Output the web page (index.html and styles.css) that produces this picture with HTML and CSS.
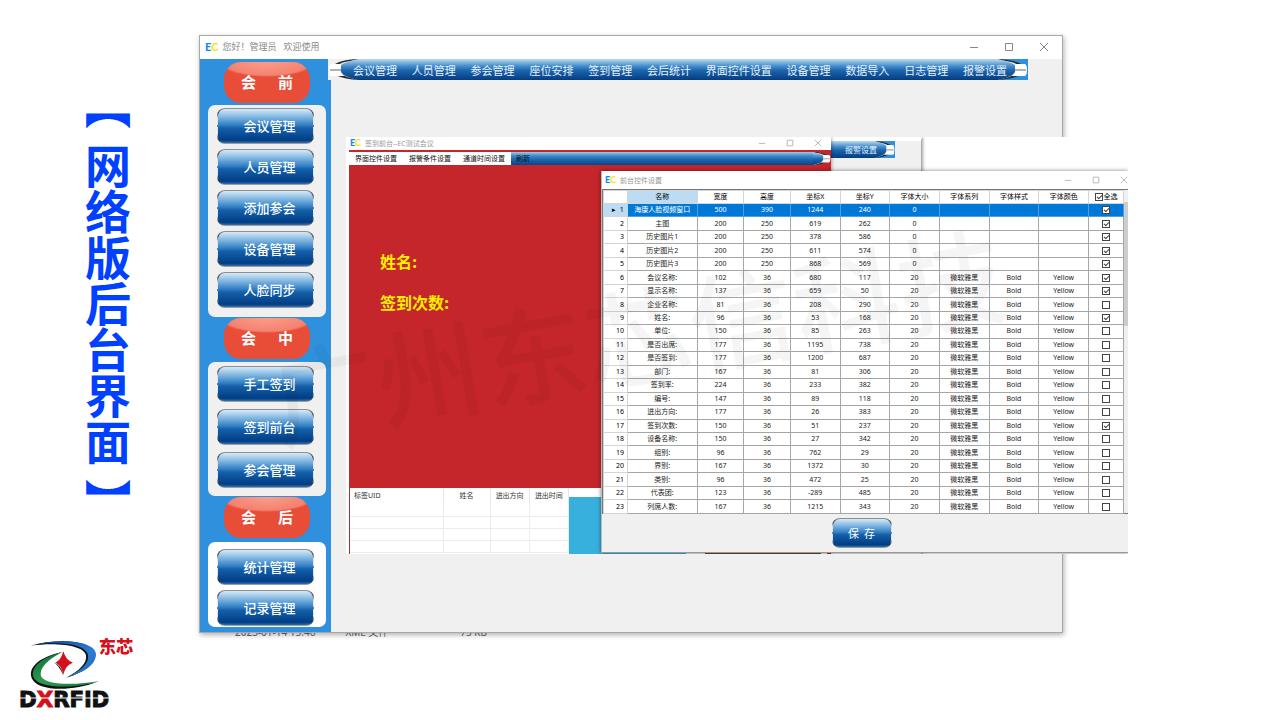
FILE: index.html
```html
<!DOCTYPE html>
<html lang="zh-CN">
<head>
<meta charset="utf-8">
<title>网络版后台界面</title>
<link rel="stylesheet" href="styles.css">
</head>
<body>
<svg class="defs" width="0" height="0" aria-hidden="true">
  <defs>
    <linearGradient id="bar" gradientUnits="userSpaceOnUse" x1="0" y1="0" x2="0" y2="21">
      <stop offset="0" stop-color="#b9dcf3"/><stop offset=".3" stop-color="#4f94cf"/>
      <stop offset=".55" stop-color="#1b65ad"/><stop offset="1" stop-color="#063c80"/>
    </linearGradient>
    <linearGradient id="blue" x1="0" y1="0" x2="1" y2="1">
      <stop offset="0" stop-color="#06408e"/><stop offset=".6" stop-color="#2b7fd6"/><stop offset="1" stop-color="#1c63b5"/>
    </linearGradient>
    <linearGradient id="green" x1="0" y1="0" x2="1" y2="1">
      <stop offset="0" stop-color="#0b6b37"/><stop offset=".5" stop-color="#2d9a50"/><stop offset="1" stop-color="#0b7a3c"/>
    </linearGradient>
    <symbol id="cap" viewBox="0 0 30 21" preserveAspectRatio="none">
      <path d="M0 0H30V21H0Z" fill="currentColor"/>
      <path d="M0 0C10 .5 18 2 23 5V16C16 19 8 20.500 0 21Z" fill="#2b2b2b"/>
      <path d="M0 1C9 2 16 3 20 6V14C14 17 8 19 0 21Z" fill="#dce6ee"/>
      <path d="M0 0C8 2 15 4 18 7V13C14 17 8 19 0 21Z" fill="url(#bar)"/>
      <path d="M17 5H27Q29 6 29 11T27 17H14L17 13Z" fill="#fff"/>
      <path d="M17 11H28" stroke="#666"/>
    </symbol>
    <symbol id="winbtns" viewBox="0 0 80 10">
      <path d="M1 5.500H9M36.500 1.500H43.500V8.500H36.500ZM71 1L79 9M79 1L71 9" fill="none" stroke="currentColor"/>
    </symbol>
  </defs>
</svg>

<div class="stage">
  <aside class="caption">
    <h1><span>【</span>网络版后台界面<span>】</span></h1>
  </aside>

  <main class="desktop">
    <div class="file-row"><span>2023-01-14 15:46</span><span>XML 文件</span><span>75 KB</span></div>
    <section class="win main-win">
      <header class="titlebar">
        <b class="ec">E<i>C</i></b><span>您好！管理员&nbsp;&nbsp; 欢迎使用</span>
        <svg class="winbtns" viewBox="0 0 80 10"><use href="#winbtns"/></svg>
      </header>
      <div class="body">
        <div class="sidebar">
          <h2 class="pill"><span>会</span><span>前</span></h2>
          <div class="group">
            <button class="glossy">会议管理</button>
            <button class="glossy">人员管理</button>
            <button class="glossy">添加参会</button>
            <button class="glossy">设备管理</button>
            <button class="glossy">人脸同步</button>
          </div>
          <h2 class="pill"><span>会</span><span>中</span></h2>
          <div class="group loose">
            <button class="glossy">手工签到</button>
            <button class="glossy">签到前台</button>
            <button class="glossy">参会管理</button>
          </div>
          <h2 class="pill"><span>会</span><span>后</span></h2>
          <div class="group last">
            <button class="glossy">统计管理</button>
            <button class="glossy">记录管理</button>
          </div>
        </div>
        <div class="content">
          <nav class="menu">
            <svg class="cap flip"><use href="#cap"/></svg>
            <a href="#">会议管理</a><a href="#">人员管理</a><a href="#">参会管理</a><a href="#">座位安排</a><a href="#">签到管理</a><a href="#">会后统计</a><a href="#">界面控件设置</a><a href="#">设备管理</a><a href="#">数据导入</a><a href="#">日志管理</a><a href="#">报警设置</a>
            <svg class="cap"><use href="#cap"/></svg>
          </nav>
        </div>
      </div>
    </section>

    <div class="overlay">
      <div class="back-win">
        <nav class="menu small"><a href="#">报警设置</a><svg class="cap"><use href="#cap"/></svg></nav>
      </div>

      <section class="win sign-win">
        <header class="titlebar tiny">
          <b class="ec">E<i>C</i></b><span>签到前台--EC测试会议</span>
          <svg class="winbtns" viewBox="0 0 80 10"><use href="#winbtns"/></svg>
        </header>
        <div class="red">
          <nav class="tabs">
            <a href="#">界面控件设置</a><a href="#">报警条件设置</a><a href="#">通道时间设置</a>
            <div class="tabbar"><a href="#">刷新</a><svg class="cap"><use href="#cap"/></svg></div>
          </nav>
          <p>姓名:</p>
          <p>签到次数:</p>
        </div>
        <div class="lower">
          <table class="log">
            <thead><tr><th>标签UID</th><th>姓名</th><th>进出方向</th><th>进出时间</th></tr></thead>
            <tbody>
              <tr><td></td><td></td><td></td><td></td></tr>
              <tr><td></td><td></td><td></td><td></td></tr>
              <tr><td></td><td></td><td></td><td></td></tr>
              <tr><td></td><td></td><td></td><td></td></tr>
            </tbody>
          </table>
          <div class="art"></div>
        </div>
      </section>

      <section class="win set-win">
        <header class="titlebar tiny">
          <b class="ec">E<i>C</i></b><span>前台控件设置</span>
          <svg class="winbtns" viewBox="0 0 80 10"><use href="#winbtns"/></svg>
        </header>
        <div class="grid-wrap">
          <table class="grid">
            <colgroup><col class="c-no"><col class="c-name"><col class="c-s"><col class="c-s"><col><col><col><col><col><col><col class="c-chk"></colgroup>
            <thead><tr><th></th><th class="on">名称</th><th>宽度</th><th>高度</th><th>坐标X</th><th>坐标Y</th><th>字体大小</th><th>字体系列</th><th>字体样式</th><th>字体颜色</th><th><label><input type="checkbox" checked>全选</label></th></tr></thead>
            <tbody id="rows"></tbody>
          </table>
          <div class="scroll"><i></i></div>
        </div>
        <footer><button class="glossy save">保&nbsp; 存</button></footer>
      </section>
    </div>
  </main>
</div>

<svg class="watermark" viewBox="0 0 1280 720" aria-hidden="true"><text transform="rotate(-10 638 340)" x="638" y="378" text-anchor="middle">广州东芯信科技</text></svg>

<svg class="logo" viewBox="0 0 480 300" role="img" aria-label="东芯 DXRFiD">
  <path d="M90 77C190 50 285 65 284 108C280 140 240 160 198 174C240 150 262 130 258 105C250 75 170 66 90 77Z" fill="#111"/>
  <path d="M104 74C200 52 292 68 288 106C284 140 245 160 202 171C245 150 268 130 264 104C255 72 180 64 104 74Z" fill="url(#blue)"/>
  <path d="M183 97C120 112 84 140 95 174C110 216 220 214 290 186C220 202 135 202 118 174C108 148 140 118 183 97Z" fill="#111"/>
  <path d="M190 95C125 112 92 140 100 170C114 208 230 206 299 183C225 196 140 196 124 170C115 145 145 116 190 95Z" fill="url(#green)"/>
  <path d="M161 128Q184 134 191 168Q178 136 161 128Z" fill="#111"/>
  <path d="M190 94Q198 122 219 128Q198 134 190 163Q183 134 166 128Q183 121 190 94Z" fill="#d5101c"/>
  <text class="logo-cn" x="296" y="99">东芯</text>
  <text class="logo-en" x="57" y="260">D<tspan class="x">X</tspan>RFiD</text>
  <path d="M58 234H330" stroke="#fff" stroke-width="3"/>
</svg>
<script src="rows.js"></script>
</body>
</html>
```

FILE: styles.css
```css
* { box-sizing: border-box; }
body {
  margin: 0;
  position: relative;
  min-height: 100vh;
  overflow: hidden;
  background: #fff;
  font-family: "Noto Sans", "Noto Sans CJK SC", sans-serif;
}
a { color: inherit; text-decoration: none; }
i { font-style: normal; }
.defs { position: absolute; }
.stage { display: flex; align-items: flex-start; }

.caption { flex: 0 0 199px; padding: 83px 0 0 84px; }
.caption h1 {
  margin: 0;
  writing-mode: vertical-rl;
  font: 700 46px/48px "Noto Sans CJK SC", sans-serif;
  color: #0040ff;
}
.caption span { display: inline-block; font-weight: 900; }
.caption span:first-child { margin-bottom: 14px; }
.caption span:last-child { margin-top: 14px; }

.desktop { position: relative; flex: 1; padding: 35px 217px 0 0; }
.file-row {
  position: absolute;
  left: 36px;
  top: 625px;
  display: flex;
  gap: 30px;
  font-size: 10px;
  line-height: 14px;
  color: #666;
}
.file-row span:last-child { margin-left: 42px; }
.win { background: #fff; }
.main-win {
  position: relative;
  border: 1px solid #a8a8a8;
  box-shadow: 1px 2px 5px rgba(0, 0, 0, .3);
}
.titlebar {
  display: flex;
  align-items: center;
  gap: 4px;
  height: 23px;
  padding: 0 13px 2px 5px;
  font-size: 9px;
  color: #8a8a8a;
}
.ec { font: 900 11px/12px "Lato", sans-serif; color: #1389f0; }
.ec i { color: #ffe11a; }
.winbtns { width: 80px; height: 10px; margin-left: auto; color: #888; }
.titlebar.tiny { height: 13px; padding: 0 9px 1px 4px; font-size: 7px; color: #999; }
.tiny .ec { font-size: 9px; line-height: 10px; }
.tiny .winbtns { width: 64px; height: 8px; color: #aaa; }

.body { display: flex; background: #f0f0f0; }
.sidebar {
  flex: 0 0 131px;
  display: flex;
  flex-direction: column;
  align-items: center;
  padding: 2px 5px 5px 8px;
  background: #2f91dd;
}
.pill {
  position: relative;
  display: flex;
  justify-content: space-between;
  width: 86px;
  height: 41px;
  margin: 1px 0 2px;
  padding: 0 17px;
  border-radius: 17px;
  background: radial-gradient(ellipse 48px 15px at 50% 0, #fb9d8c 0, #f4826f 88%, #e84d37 100%) #e84d37;
  font: 700 15px/40px "Noto Sans CJK SC", sans-serif;
  color: #fff;
}
.group {
  display: flex;
  flex-direction: column;
  gap: 5px;
  width: 100%;
  padding: 3px 12px 9px 9px;
  border-radius: 7px;
  background: #f0f0f0;
}
.group.loose { gap: 7px; margin-top: 1px; padding-top: 4px; padding-bottom: 8px; }
.group.last { padding-top: 7px; padding-bottom: 1px; margin-top: 2px; background: #fff; }
.glossy {
  height: 36px;
  padding: 0 0 0 8px;
  border: 1px solid transparent;
  border-radius: 8px;
  background:
    linear-gradient(#d6eaf8, #86bae3 22%, #2f7dc2 48%, #1560aa 56%, #003d84 92%, #3670ab) padding-box,
    linear-gradient(#999, #333 14%, #dde6ee 28%, #dde6ee 46%, #345 50%, #dde6ee 54%, #dde6ee 72%, #234 88%, #aaa) border-box;
  font: 500 13px/32px "Noto Sans CJK SC", sans-serif;
  color: #fff;
}

.content { flex: 1; }
.menu {
  position: relative;
  display: flex;
  align-items: center;
  justify-content: space-between;
  height: 21px;
  margin: 0 34px 0 -3px;
  padding: 0 21px 0 25px;
  background: linear-gradient(#b9dcf3, #4f94cf 30%, #1b65ad 55%, #063c80);
  font-size: 11px;
  color: #e8f2fb;
}
.menu a { position: relative; z-index: 1; }
.cap { position: absolute; right: 0; top: 0; width: 30px; height: 100%; color: #2f91dd; }
.cap.flip { right: auto; left: 0; transform: scaleX(-1); color: #f0f0f0; }

.overlay {
  position: absolute;
  left: 147px;
  top: 137px;
  width: 782px;
  height: 417px;
  overflow: hidden;
  background: #fff;
}
.back-win {
  position: absolute;
  left: 480px;
  top: 0;
  width: 96px;
  height: 417px;
  border-top: 4px solid #fff;
  border-right: 1px solid #aaa;
  background: #f0f0f0;
  box-shadow: 1px 0 3px rgba(0, 0, 0, .35);
}
.menu.small { height: 17px; margin: 0 26px 0 0; padding: 0 15px 0 19px; font-size: 8px; }
.small .cap { width: 20px; }
.sign-win { position: absolute; left: 0; top: 0; width: 485px; padding-left: 3px; box-shadow: 1px 0 3px rgba(0, 0, 0, .3); }
.sign-win .titlebar { padding-left: 1px; }
.red { height: 338px; padding-top: 2px; background: #c4262b; }
.tabs { display: flex; height: 13px; margin-bottom: 84px; background: #fff; font: 7px/13px "Noto Sans CJK SC", sans-serif; color: #111; }
.tabs > a { padding: 0 6px; }
.tabbar { position: relative; flex: 1; background: linear-gradient(#9ecbea, #3f88c6 30%, #1b65ad 60%, #0b4488); }
.tabbar a { padding-left: 5px; }
.tabbar .cap { width: 18px; color: #c4262b; }
.red p { margin: 0 0 17px 31px; font: 700 16px/24px "Noto Sans CJK SC", sans-serif; color: #ffee00; }
.lower { display: flex; height: 66px; border-left: 1px solid #a33; }
.log { flex: 0 0 219px; table-layout: fixed; width: 219px; border-collapse: collapse; font-size: 7px; line-height: 10px; color: #333; align-self: flex-start; }
.log th { height: 16px; padding: 0; font-weight: 400; border-right: 1px solid #e6e6e6; }
.log th:first-child { width: 93px; padding-left: 4px; text-align: left; }
.log th:nth-child(2) { width: 47px; }
.log td { height: 12px; padding: 0; border: 1px solid #ececec; border-left: 0; border-top: 0; }
.art {
  flex: 1;
  margin-top: 9px;
  background: linear-gradient(90deg, #38b0de 0 117px, #eee 117px 136px, #6b4a2a 136px 252px, #eee 252px 258px, #b22226 258px);
}

.set-win {
  position: absolute;
  left: 255px;
  top: 34px;
  right: 0;
  height: 382px;
  border-left: 1px solid #bbb;
  border-bottom: 1px solid #999;
  background: #f0f0f0;
  box-shadow: 0 0 4px rgba(0, 0, 0, .5);
}
.set-win .titlebar { height: 18px; padding: 0 0 1px 3px; background: #fff; }
.grid-wrap { display: flex; height: 325px; border: 1px solid #777; border-right: 0; background: #fff; }
.grid { flex: 1; table-layout: fixed; height: 324px; border-collapse: collapse; font-size: 7px; line-height: 10px; color: #222; }
.grid col { width: 50px; }
.grid .c-no { width: 24px; }
.grid .c-name { width: 70px; }
.grid .c-s { width: 47px; }
.grid .c-chk { width: 35px; }
.grid th, .grid td { padding: 0; height: 13px; border: 1px solid #a6a6a6; font-weight: 400; text-align: center; white-space: nowrap; }
.grid th { border-color: #d5d5d5; color: #000; }
.grid th.on { background: #bcdcf4; }
.grid tbody th { padding-right: 3px; text-align: right; }
.grid tr.sel td { background: #0078d7; color: #fff; border-color: #4b9fe0; }
.grid tr.sel th { background: #bcdcf4; }
.grid label { display: flex; align-items: center; justify-content: center; gap: 1px; }
.grid input {
  appearance: none;
  display: block;
  position: relative;
  width: 8px;
  height: 8px;
  margin: 0 auto;
  border: 1px solid #444;
  background: #fff;
}
.grid label input { margin: 0; }
.grid input:checked::after {
  content: "";
  position: absolute;
  left: 1px;
  top: 1px;
  width: 4px;
  height: 2px;
  border: solid #444;
  border-width: 0 0 1px 1px;
  transform: rotate(-45deg);
}
.scroll { flex: 0 0 4px; padding-top: 12px; background: #f0f0f0; }
.scroll i { display: block; height: 124px; background: #cdcdcd; }
.set-win footer { display: flex; justify-content: center; padding: 4px 7px 0 0; }
.save { width: 60px; height: 30px; padding: 0; font-size: 11px; line-height: 26px; font-weight: 400; }

.watermark { position: absolute; inset: 0; width: 100%; pointer-events: none; }
.watermark text { font: 500 106px "Noto Sans CJK SC", sans-serif; fill: rgba(0, 0, 0, .04); }
.logo { position: absolute; left: 0; bottom: 0; width: 160px; height: 100px; }
.logo-cn { font: 900 52px "Noto Sans CJK SC", sans-serif; fill: #d5101c; }
.logo-en { font: 700 64px "DejaVu Sans", sans-serif; fill: #111; stroke: #111; stroke-width: 3px; }
.logo-en .x { fill: #d5101c; stroke: #d5101c; }
```

FILE: rows.js
```js
const rows = [
  ["海康人脸视频窗口", 500, 390, 1244, 240, 0, 1],
  ["主图", 200, 250, 619, 262, 0, 1],
  ["历史图片1", 200, 250, 378, 586, 0, 1],
  ["历史图片2", 200, 250, 611, 574, 0, 1],
  ["历史图片3", 200, 250, 868, 569, 0, 1],
  ["会议名称:", 102, 36, 680, 117, 20, 1],
  ["显示名称:", 137, 36, 659, 50, 20, 1],
  ["企业名称:", 81, 36, 208, 290, 20, 0],
  ["姓名:", 96, 36, 53, 168, 20, 1],
  ["单位:", 150, 36, 85, 263, 20, 0],
  ["是否出席:", 177, 36, 1195, 738, 20, 0],
  ["是否签到:", 177, 36, 1200, 687, 20, 0],
  ["部门:", 167, 36, 81, 306, 20, 0],
  ["签到率:", 224, 36, 233, 382, 20, 0],
  ["编号:", 147, 36, 89, 118, 20, 0],
  ["进出方向:", 177, 36, 26, 383, 20, 0],
  ["签到次数:", 150, 36, 51, 237, 20, 1],
  ["设备名称:", 150, 36, 27, 342, 20, 0],
  ["组别:", 96, 36, 762, 29, 20, 0],
  ["界别:", 167, 36, 1372, 30, 20, 0],
  ["类别:", 96, 36, 472, 25, 20, 0],
  ["代表团:", 123, 36, -289, 485, 20, 0],
  ["列席人数:", 167, 36, 1215, 343, 20, 0]
];
document.getElementById("rows").innerHTML = rows.map((r, i) => {
  const font = r[5] ? ["微软雅黑", "Bold", "Yellow"] : ["", "", ""];
  const cells = r.slice(0, 6).concat(font).map(v => `<td>${v}</td>`).join("");
  return `<tr class="${i ? "" : "sel"}"><th>${i ? "" : "▸&nbsp; "}${i + 1}</th>${cells}` +
    `<td><input type="checkbox" aria-label="${r[0]}"${r[6] ? " checked" : ""}></td></tr>`;
}).join("");
```
